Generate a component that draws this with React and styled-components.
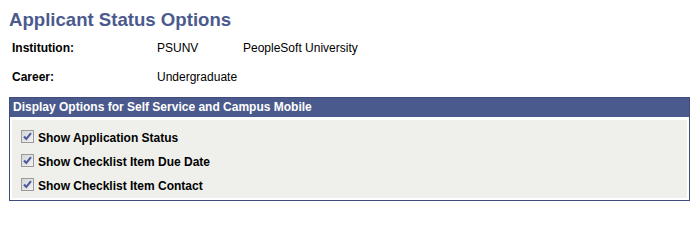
import React from "react";
import styled, { createGlobalStyle } from "styled-components";

const GlobalStyle = createGlobalStyle`
  body {
    margin: 0;
    background: #ffffff;
    font-family: Arial, "Liberation Sans", sans-serif;
  }
`;

const Page = styled.div`
  width: 699px;
  padding: 9px 0 0 9px;
  box-sizing: border-box;
`;

const Title = styled.h1`
  margin: 0;
  font-size: 18.6px;
  line-height: 22px;
  font-weight: bold;
  color: #4b5a8d;
`;

const InfoGrid = styled.div`
  display: grid;
  grid-template-columns: 145px 86px auto;
  row-gap: 15px;
  margin: 10px 0 0 3px;
  font-size: 12px;
  line-height: 14px;
  color: #000;
`;

const Label = styled.span`
  font-weight: bold;
`;

const Value = styled.span``;

const GroupBox = styled.section`
  margin-top: 13px;
  width: 681px;
  box-sizing: border-box;
  border: 1px solid #3f4c7c;
`;

const GroupHeader = styled.div`
  height: 19px;
  line-height: 19px;
  padding-left: 3px;
  background: #4b5a8c;
  color: #ffffff;
  font-size: 12px;
  font-weight: bold;
`;

const GroupBody = styled.div`
  padding: 3px 2px 2px 2px;
  background: #ffffff;
`;

const Fill = styled.div`
  display: flex;
  flex-direction: column;
  padding: 6px 0 0 9px;
  height: 78px;
  box-sizing: border-box;
  background: #eff0eb;
`;

const CheckRow = styled.label`
  display: flex;
  align-items: flex-start;
  gap: 4px;
  height: 24px;
  line-height: 24px;
  font-size: 12px;
  font-weight: bold;
  color: #000;
`;

const Box = styled.span`
  display: inline-flex;
  align-items: center;
  justify-content: center;
  width: 13px;
  height: 13px;
  margin-top: 4px;
  box-sizing: border-box;
  border: 1px solid #9a9a9a;
  background: linear-gradient(135deg, #d6d6d6, #f2f2f2);
`;

const CheckBox = () => (
  <Box>
    <svg width="9" height="9" viewBox="0 0 9 9">
      <path d="M1 4.5 L3.3 7 L8 1.2" fill="none" stroke="#4a5a9e" strokeWidth="2" />
    </svg>
  </Box>
);

const options = [
  "Show Application Status",
  "Show Checklist Item Due Date",
  "Show Checklist Item Contact",
];

const App = () => (
  <>
    <GlobalStyle />
    <Page>
      <Title>Applicant Status Options</Title>
      <InfoGrid>
        <Label>Institution:</Label>
        <Value>PSUNV</Value>
        <Value>PeopleSoft University</Value>
        <Label>Career:</Label>
        <Value>Undergraduate</Value>
        <Value />
      </InfoGrid>
      <GroupBox>
        <GroupHeader>Display Options for Self Service and Campus Mobile</GroupHeader>
        <GroupBody>
          <Fill>
            {options.map((text) => (
              <CheckRow key={text}>
                <CheckBox />
                {text}
              </CheckRow>
            ))}
          </Fill>
        </GroupBody>
      </GroupBox>
    </Page>
  </>
);

export default App;
